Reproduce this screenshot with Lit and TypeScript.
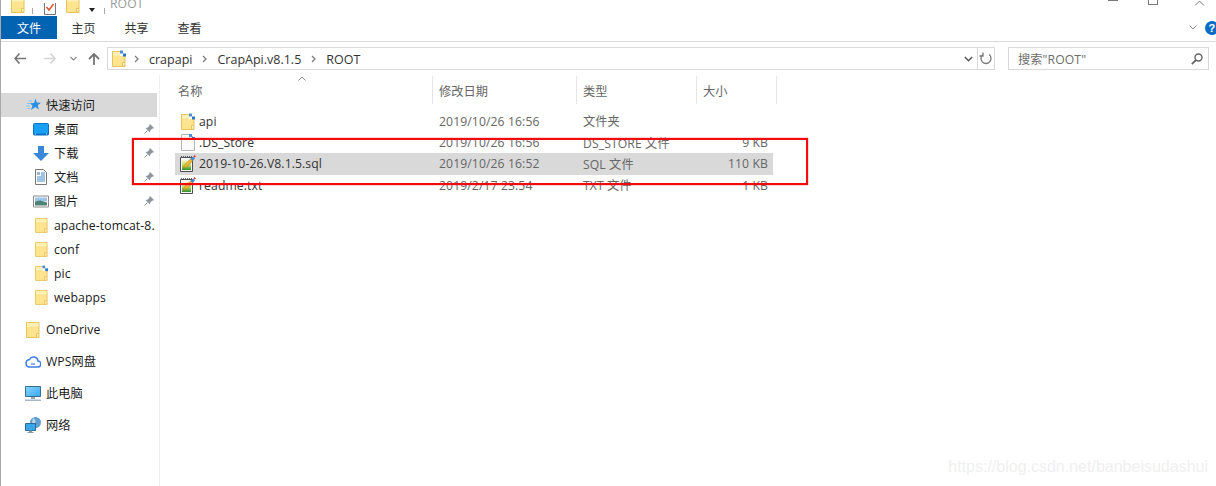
import { LitElement, html, css, svg } from "lit";
import { customElement } from "lit/decorators.js";

const folder = (big = false, dots = false) => html`<svg class="${big ? "ic ic14" : "ic ic12"}" viewBox="0 0 14 17">
  <path d="M.5 1.5h12.5v15H.5z" fill="#ffe48f" stroke="#e6c35c"/>
  <path d="M1 2h11.5v3.5H1z" fill="#fff0b8"/>
  <path d="M10.5 16.5v-4h2.5" fill="#fff3c4" stroke="#e6c35c"/>
  ${dots ? svg`<path d="M8 0h6v6H8z" fill="#fff"/><path d="M8 .5h3v3H8z" fill="#4a90d9"/><path d="M11 3.5h3v3h-3z" fill="#2f75c4"/>` : ""}
</svg>`;

const docIcon = html`<svg class="ic ic14" viewBox="0 0 14 17">
  <path d="M.5.5h9l4 4v12H.5z" fill="#fbfbfb" stroke="#b4b4b4"/>
  <path d="M8 0h3v3H8z" fill="#4a90d9"/><path d="M11 3h3v3h-3z" fill="#2f75c4"/>
</svg>`;

const noteIcon = html`<svg class="ic note" viewBox="0 0 16 17">
  <defs><linearGradient id="ng" x1="0" y1="0" x2="0" y2="1"><stop offset="0" stop-color="#f4f6d8"/><stop offset=".55" stop-color="#b5d85a"/><stop offset="1" stop-color="#2f8f2f"/></linearGradient></defs>
  <path d="M.5 2.500h12v14H.5z" fill="#f7f7f7" stroke="#4f4f4f"/>
  <path d="M1 1.500h11" stroke="#666" stroke-dasharray="1 1"/>
  <path d="M2 5h9v10H2z" fill="url(#ng)"/>
  <path d="M3.500 13l1-3 6.500-6.500 2 2L6.500 12z" fill="#f4b82e" stroke="#a87514" stroke-width=".5"/>
  <path d="M10.500 4l2.500-2.500 2 2L12.500 6z" fill="#3f86d8"/>
  <path d="M13.500 1.500l1-1.500 1.500 1.500-1.500 1z" fill="#d8342c"/>
</svg>`;

const star = html`<svg class="ic ic14s" viewBox="0 0 15 14">
  <path d="M9.500 .5l1.300 4 4.200.2-3.300 2.500 1.200 4.300-3.600-2.500-4.300 3 1.500-4.600-2.800-2.200 4.300-.2z" fill="#2a8fe3"/>
  <path d="M1 5.500h3.500M0 8h4M1.500 10.500h2.500M3 3h3" stroke="#86c3f0" stroke-width="1.100"/>
</svg>`;

const desktop = html`<svg class="ic ic16" viewBox="0 0 16 13">
  <rect x=".5" y=".5" width="15" height="11.500" rx="1" fill="#18a0f5" stroke="#0c70c8"/>
  <path d="M1 10.500h14V12H1z" fill="#0c70c8"/>
  <path d="M2 11h1M13 11h1" stroke="#bfe4ff"/>
</svg>`;

const download = html`<svg class="ic ic16" viewBox="0 0 16 15">
  <path d="M5 0h6v7h5l-8 8-8-8h5z" fill="#3a86d8"/>
</svg>`;

const textDoc = html`<svg class="ic ic12w" viewBox="0 0 12 16">
  <path d="M.5.500h8l3 3v12H.5z" fill="#fff" stroke="#777"/>
  <path d="M6 4h4M6 6h4M2 8h8M2 10h8M2 12h8" stroke="#3f88c8"/>
  <path d="M2 3h3v3H2z" fill="#9bb8d0"/>
</svg>`;

const picture = html`<svg class="ic ic16" viewBox="0 0 16 12">
  <path d="M.5.500h15v11H.5z" fill="#fff" stroke="#8a8a8a"/>
  <path d="M2 2h12v4H2z" fill="#9cc5e8"/>
  <path d="M2 6l5-1 7 2v3H2z" fill="#4d8276"/>
</svg>`;

const pin = html`<svg class="pin" viewBox="0 0 10 10">
  <path d="M6 0l4 4-1 .8-.7-.3L6.200 6.500 6 8.500 1.500 4l2-.2 2-2.100-.3-.7z" fill="#8c969e"/>
  <path d="M3.200 6.800L.5 9.500" stroke="#8c969e"/>
</svg>`;

const cloud = html`<svg class="ic ic16" viewBox="0 0 16 13">
  <path d="M4 12h8.500a3 3 0 0 0 .5-6 4.500 4.500 0 0 0-8.500-1.500A3.800 3.800 0 0 0 4 12z" fill="#fff" stroke="#3f7fe8" stroke-width="1.500"/>
  <path d="M6 9h4" stroke="#3f7fe8" stroke-width="1.200"/>
</svg>`;

const monitor = html`<svg class="ic ic16" viewBox="0 0 16 15">
  <defs><linearGradient id="mg" x1="0" y1="0" x2="1" y2="1"><stop offset="0" stop-color="#8ad6fd"/><stop offset="1" stop-color="#35a8f2"/></linearGradient></defs>
  <path d="M.5.500h15v10H.5z" fill="url(#mg)" stroke="#3a6d8c"/>
  <path d="M6 11h4v2H6z" fill="#9aa7b2"/>
  <path d="M0 13.500h16V15H0z" fill="#a9b6c2"/>
</svg>`;

const network = html`<svg class="ic ic16t" viewBox="0 0 16 16">
  <circle cx="10.500" cy="5.500" r="5.500" fill="#5f9ecf"/>
  <path d="M8 1c2 1 3 3 2 5l-3 0z" fill="#bcd9ee"/>
  <path d="M.5 6.500h10v7H.5z" fill="#39a6ea" stroke="#2a6c96"/>
  <path d="M4 13.500h3V15H4zM2.500 15h6v1h-6z" fill="#8a98a5"/>
</svg>`;

const chev = html`<svg class="chev" viewBox="0 0 5 8"><path d="M1 1l3 3-3 3" fill="none" stroke="#7d7d7d" stroke-width="1.300"/></svg>`;

interface Nav { label: string; icon: unknown; pinned?: boolean; }
const sub: Nav[] = [
  { label: "桌面", icon: desktop, pinned: true },
  { label: "下载", icon: download, pinned: true },
  { label: "文档", icon: textDoc, pinned: true },
  { label: "图片", icon: picture, pinned: true },
  { label: "apache-tomcat-8.", icon: folder() },
  { label: "conf", icon: folder() },
  { label: "pic", icon: folder(false, true) },
  { label: "webapps", icon: folder() },
];
const top: Nav[] = [
  { label: "OneDrive", icon: folder(true) },
  { label: "WPS网盘", icon: cloud },
  { label: "此电脑", icon: monitor },
  { label: "网络", icon: network },
];
const files = [
  { name: "api", icon: folder(true, true), date: "2019/10/26 16:56", type: "文件夹", size: "" },
  { name: ".DS_Store", icon: docIcon, date: "2019/10/26 16:56", type: "DS_STORE 文件", size: "9 KB" },
  { name: "2019-10-26.V8.1.5.sql", icon: noteIcon, date: "2019/10/26 16:52", type: "SQL 文件", size: "110 KB", sel: true },
  { name: "readme.txt", icon: noteIcon, date: "2019/2/17 23:54", type: "TXT 文件", size: "1 KB" },
];

@customElement("app-root")
export class AppRoot extends LitElement {
  static styles = css`
    :host { display: block; width: 1216px; height: 486px; position: relative; overflow: hidden; background: #fff;
      font-family: "Open Sans", "Noto Sans CJK SC", sans-serif; font-size: 12.200px; letter-spacing: .1px; color: #1a1a1a; }
    * { box-sizing: border-box; }
    .win { height: 486px; border-left: 1px solid #a9a9a9; display: flex; flex-direction: column; }
    .ic { display: block; flex: none; }
    .ic12 { width: 13px; height: 16px; }
    .ic14 { width: 14px; height: 17px; }
    .ic14s { width: 15px; height: 14px; }
    .ic16 { width: 16px; height: 15px; }
    .ic16t { width: 16px; height: 16px; }
    .note { width: 16px; height: 17px; }
    .ic12w { width: 12px; height: 16px; }
    .pin { width: 10px; height: 10px; display: block; margin-left: auto; margin-right: 3px; }
    .chev { width: 5px; height: 8px; display: block; flex: none; }

    .title { height: 16px; overflow: hidden; display: flex; align-items: flex-end; color: #9a9a9a; padding-left: 10px; flex: none; }
    .title > * { flex: none; }
    .title .q { height: 20px; display: flex; align-items: flex-start; }
    .tsep { width: 1px; height: 6px; background: #a8a8a8; margin: 0 11px 2px 7px; }
    .qcheck { width: 12px; height: 12px; margin-bottom: 1px; margin-right: 10px; display: block; }
    .tname { line-height: 14px; margin-bottom: 5px; }
    .drop { width: 0; height: 0; border: 3px solid transparent; border-top: 4px solid #222; border-bottom: 0; margin: 0 9px 4px 9px; }
    .tsep.t2 { margin-left: 0; margin-right: 5px; }
    .tctl { margin-left: auto; display: flex; align-items: flex-end; }
    .min { width: 10px; height: 1px; background: #777; margin-right: 30px; margin-bottom: 15px; }
    .max { width: 10px; height: 5px; border: 1px solid #777; border-top: 0; margin-right: 36px; margin-bottom: 11px; }
    .cls { width: 11px; height: 6px; margin-right: 11px; margin-bottom: 10px; display: block; }

    .ribbon { height: 26px; flex: none; display: flex; align-items: stretch; border-bottom: 1px solid #dadada; }
    .tab { width: 53px; height: 23px; display: flex; align-items: center; justify-content: center; color: #333; font-size: 12px; letter-spacing: 0; }
    .tab.file { width: 56px; background: #0263b2; color: #fff; }
    .rend { margin-left: auto; display: flex; align-items: center; gap: 8px; height: 23px; }
    .rchev { width: 8px; height: 5px; display: block; }
    .help { width: 14px; height: 14px; border-radius: 50%; background: #0f6cc4; color: #fff; font: bold 11px/14px "Liberation Sans", sans-serif; text-align: center; margin-right: -3px; }

    .addr { height: 33px; flex: none; display: flex; align-items: center; padding: 0 7px 0 13px; }
    .nav { display: block; flex: none; }
    .fwd { margin-left: 18px; }
    .dn { margin-left: 14px; }
    .up { margin-left: 11px; }
    .abox { margin-left: 7px; width: 888px; height: 23px; border: 1px solid #d9d9d9; display: flex; align-items: center; padding-left: 4px; color: #333; font-size: 12.500px; letter-spacing: 0; }
    .afolder { margin-right: 8px; }
    .crumb { margin: 1px 10px 0 10px; }
    .adrop { margin-left: auto; width: 9px; height: 6px; display: block; margin-right: 4px; }
    .adiv { width: 1px; align-self: stretch; background: #d9d9d9; }
    .refresh { width: 16px; height: 14px; display: block; }
    .rwrap { width: 16px; display: flex; justify-content: center; }
    .sbox { margin-left: 13px; width: 201px; height: 23px; border: 1px solid #d9d9d9; display: flex; align-items: center; padding: 0 5px 0 9px; color: #6d6d6d; }
    .sicon { margin-left: auto; width: 12px; height: 12px; display: block; }

    .main { flex: 1; display: flex; min-height: 0; }
    .side { width: 159px; flex: none; border-right: 1px solid #f0f0f0; padding-top: 18px; padding-right: 2px; }
    .nrow { height: 24px; display: flex; align-items: center; }
    .nrow.l1 { padding-left: 24px; gap: 5px; }
    .nrow.l2 { padding-left: 32px; }
    .nrow.l2 .iw { width: 21px; display: flex; justify-content: center; flex: none; padding-right: 5px; }
    .nrow.sel { background: #d9d9d9; }
    .nrow.gap { margin-top: 8px; }
    .nrow .iw1 { width: 16px; flex: none; display: flex; justify-content: center; }
    .nlabel { white-space: nowrap; }

    .list { flex: 1; padding-left: 15px; position: relative; color: #666; min-width: 0; }
    .hdr { display: grid; grid-template-columns: 258px 144px 120px 80px; height: 28px; margin-top: 1px; width: 602px; }
    .hcell { display: flex; align-items: center; padding-left: 3px; padding-top: 2px; border-right: 1px solid #e5e5e5; position: relative; }
    .hcell.date, .hcell.type, .hcell.size { padding-left: 6px; }
    .sort { position: absolute; left: 123px; top: 0; width: 8px; height: 5px; display: block; }
    .rows { margin-top: 6.500px; }
    .row { display: grid; grid-template-columns: 258px 144px 120px 76px; height: 21.400px; width: 598px; align-items: center; }
    .row.sel { background: #d9d9d9; }
    .fname { display: flex; align-items: center; gap: 2px; padding-left: 3px; color: #333; white-space: nowrap; height: 17px; }
    .fname .box { width: 19px; display: flex; justify-content: center; flex: none; }
    .fdate, .ftype { padding-left: 6px; white-space: nowrap; }
    .fsize { text-align: right; padding-right: 5px; white-space: nowrap; }

    .redbox { position: absolute; left: 132px; top: 138px; width: 676px; height: 47px; border: 2px solid #f30a0a; box-shadow: 0 0 1px #f30a0a; pointer-events: none; }
    .wm { position: absolute; right: 8px; top: 458px; font: 16px "Liberation Sans", sans-serif; letter-spacing: 0; color: #efefef; white-space: nowrap; }
  `;

  private navRow(n: Nav) {
    return html`<div class="nrow l2"><span class="iw">${n.icon}</span><span class="nlabel">${n.label}</span>${n.pinned ? pin : ""}</div>`;
  }

  render() {
    return html`<div class="win">
      <div class="title">
        <span class="q">${folder(true)}</span>
        <span class="tsep"></span>
        <svg class="qcheck" viewBox="0 0 12 12"><path d="M.5-1h11v12.500H.5z" fill="#fff" stroke="#777"/><path d="M2.500 4l2.500 3 4.500-6" fill="none" stroke="#e0532a" stroke-width="1.500"/></svg>
        <span class="q">${folder(true)}</span>
        <span class="drop"></span>
        <span class="tsep t2"></span>
        <span class="tname">ROOT</span>
        <span class="tctl">
          <span class="min"></span><span class="max"></span>
          <svg class="cls" viewBox="0 0 11 6"><path d="M1 5.500L5.500 1 10 5.500" fill="none" stroke="#777"/></svg>
        </span>
      </div>
      <div class="ribbon">
        <div class="tab file">文件</div>
        <div class="tab">主页</div>
        <div class="tab">共享</div>
        <div class="tab">查看</div>
        <div class="rend">
          <svg class="rchev" viewBox="0 0 8 5"><path d="M.5.500L4 4 7.500.500" fill="none" stroke="#8a8a8a"/></svg>
          <div class="help">?</div>
        </div>
      </div>
      <div class="addr">
        <svg class="nav" width="12" height="11" viewBox="0 0 12 11"><path d="M5.500.500L1 5.500l4.500 5M1 5.500h11" fill="none" stroke="#757575" stroke-width="1.600"/></svg>
        <svg class="nav fwd" width="12" height="11" viewBox="0 0 12 11"><path d="M6.500.500L11 5.500l-4.500 5M11 5.500H0" fill="none" stroke="#d4d4d4" stroke-width="1.600"/></svg>
        <svg class="nav dn" width="7" height="5" viewBox="0 0 7 5"><path d="M.5 1l3 3 3-3" fill="none" stroke="#8a8a8a" stroke-width="1.200"/></svg>
        <svg class="nav up" width="12" height="12" viewBox="0 0 12 12"><path d="M1 6l5-5 5 5M6 1v11" fill="none" stroke="#757575" stroke-width="1.800"/></svg>
        <div class="abox">
          <span class="afolder">${folder(true, true)}</span>
          ${chev}<span class="crumb">crapapi</span>
          ${chev}<span class="crumb">CrapApi.v8.1.5</span>
          ${chev}<span class="crumb">ROOT</span>
          <svg class="adrop" viewBox="0 0 9 6"><path d="M.8 1l3.700 3.700L8.200 1" fill="none" stroke="#555" stroke-width="1.500"/></svg>
          <span class="adiv"></span>
          <span class="rwrap"><svg class="refresh" viewBox="0 0 16 14"><path d="M5 2.500a5 5 0 1 0 6 0M5 .500v3.500H1.500" fill="none" stroke="#777" stroke-width="1.300"/></svg></span>
        </div>
        <div class="sbox">
          <span>搜索"ROOT"</span>
          <svg class="sicon" viewBox="0 0 12 12"><circle cx="7.500" cy="4.500" r="3.500" fill="none" stroke="#666" stroke-width="1.400"/><path d="M5 7L.8 11.200" stroke="#666" stroke-width="1.800"/></svg>
        </div>
      </div>
      <div class="main">
        <div class="side">
          <div class="nrow l1 sel"><span class="iw1">${star}</span><span class="nlabel">快速访问</span></div>
          ${sub.map((n) => this.navRow(n))}
          ${top.map((n) => html`<div class="nrow l1 gap"><span class="iw1">${n.icon}</span><span class="nlabel">${n.label}</span></div>`)}
        </div>
        <div class="list">
          <div class="hdr">
            <div class="hcell">名称
              <svg class="sort" viewBox="0 0 8 5"><path d="M.5 4.500L4 1l3.500 3.500" fill="none" stroke="#8a8a8a"/></svg>
            </div>
            <div class="hcell date">修改日期</div>
            <div class="hcell type">类型</div>
            <div class="hcell size">大小</div>
          </div>
          <div class="rows">
            ${files.map((f) => html`<div class="row ${f.sel ? "sel" : ""}">
              <div class="fname"><span class="box">${f.icon}</span><span>${f.name}</span></div>
              <div class="fdate">${f.date}</div>
              <div class="ftype">${f.type}</div>
              <div class="fsize">${f.size}</div>
            </div>`)}
          </div>
        </div>
      </div>
      <div class="redbox"></div>
      <div class="wm">https://blog.csdn.net/banbeisudashui</div>
    </div>`;
  }
}
